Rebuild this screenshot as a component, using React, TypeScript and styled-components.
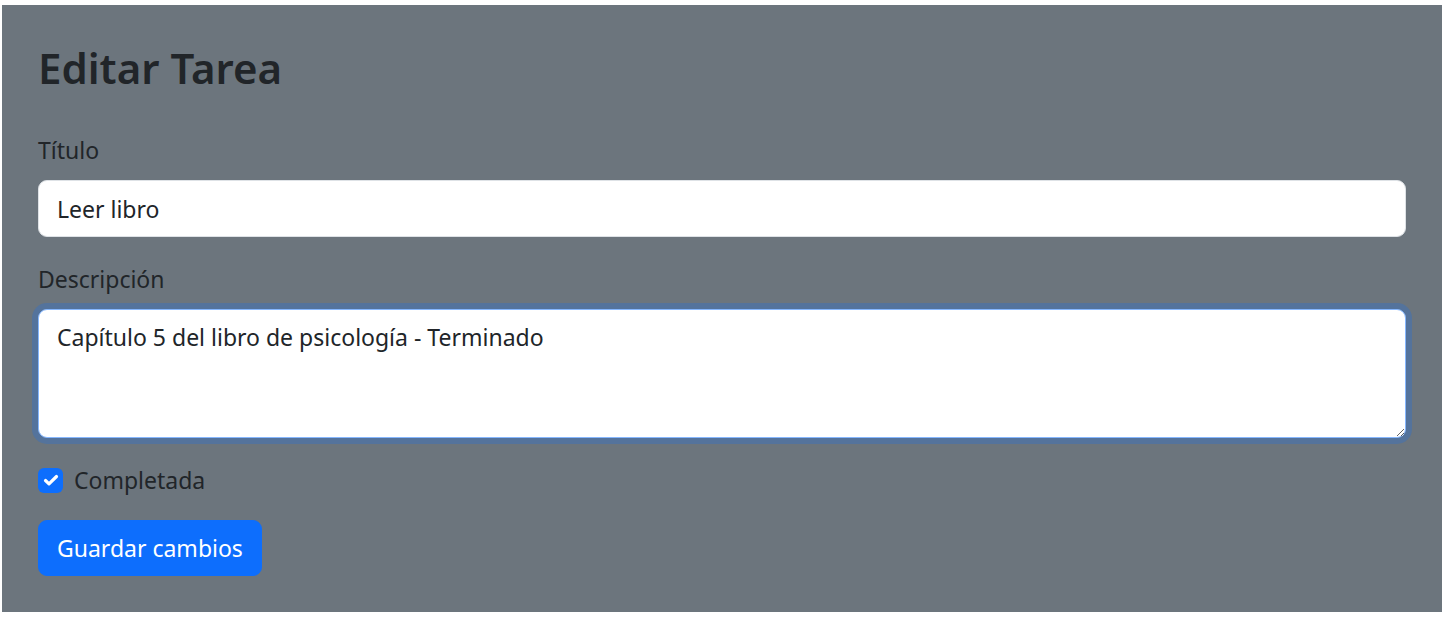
import React from "react";
import styled, { createGlobalStyle } from "styled-components";

const Global = createGlobalStyle`
  html, body { margin: 0; padding: 0; background: #ffffff; }
  body { font-family: "Noto Sans", "Open Sans", sans-serif; color: #212529; }
  * { box-sizing: border-box; }
`;

const Page = styled.div`
  padding: 5px 0 0 2px;
`;

const Panel = styled.div`
  width: 1440px;
  height: 607px;
  background: #6c757d;
  padding: 36px;
  display: flex;
  flex-direction: column;
`;

const Heading = styled.h2`
  margin: 0 0 37px;
  font-size: 42px;
  font-weight: 600;
  line-height: 54px;
  color: #212529;
`;

const Field = styled.div`
  display: flex;
  flex-direction: column;
  margin-bottom: 24px;
`;

const Label = styled.label`
  font-size: 23px;
  line-height: 36px;
  margin-bottom: 12px;
  color: #212529;
`;

const Input = styled.input`
  width: 100%;
  height: 57px;
  font: inherit;
  font-size: 23px;
  line-height: 36px;
  padding: 9px 18px;
  border: 1.5px solid #dee2e6;
  border-radius: 9px;
  background: #ffffff;
  color: #212529;
  outline: none;
`;

const TextArea = styled.textarea`
  width: 100%;
  height: 129px;
  font: inherit;
  font-size: 23px;
  line-height: 36px;
  padding: 9px 18px;
  border: 1.5px solid #86b7fe;
  border-radius: 9px;
  background: #ffffff;
  color: #212529;
  outline: none;
  resize: vertical;
  box-shadow: 0 0 0 6px rgba(13, 110, 253, 0.25);
`;

const CheckRow = styled.label`
  display: flex;
  align-items: center;
  gap: 11px;
  min-height: 36px;
  margin-bottom: 22px;
  font-size: 23px;
  line-height: 36px;
  color: #212529;
`;

const CheckBox = styled.span`
  width: 25px;
  height: 25px;
  border-radius: 6px;
  background: #0d6efd;
  display: flex;
  align-items: center;
  justify-content: center;
  flex-shrink: 0;
`;

const Button = styled.button`
  align-self: flex-start;
  height: 56px;
  font: inherit;
  font-size: 23px;
  line-height: 36px;
  padding: 9px 18px;
  border: 1.5px solid #0d6efd;
  border-radius: 9px;
  background: #0d6efd;
  color: #ffffff;
`;

export default function App() {
  return (
    <>
      <Global />
      <Page>
        <Panel>
          <Heading>Editar Tarea</Heading>
          <Field>
            <Label>Título</Label>
            <Input defaultValue="Leer libro" />
          </Field>
          <Field>
            <Label>Descripción</Label>
            <TextArea defaultValue="Capítulo 5 del libro de psicología - Terminado" />
          </Field>
          <CheckRow>
            <CheckBox>
              <svg width="20" height="20" viewBox="0 0 20 20">
                <path d="M4.5 10.5l3.5 3.3L15.5 6.5" fill="none" stroke="#fff" strokeWidth="3.2" strokeLinecap="round" strokeLinejoin="round" />
              </svg>
            </CheckBox>
            Completada
          </CheckRow>
          <Button>Guardar cambios</Button>
        </Panel>
      </Page>
    </>
  );
}
